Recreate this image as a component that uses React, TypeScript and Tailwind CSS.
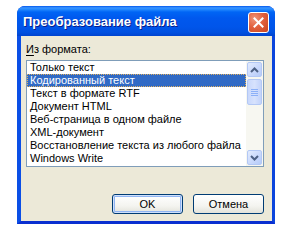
import React from "react";

const items = [
  "Только текст",
  "Кодированный текст",
  "Текст в формате RTF",
  "Документ HTML",
  "Веб-страница в одном файле",
  "XML-документ",
  "Восстановление текста из любого файла",
  "Windows Write",
];

function Chevron({ up }: { up: boolean }) {
  return (
    <svg width="9" height="6" viewBox="0 0 9 6">
      <path
        d={up ? "M1 5 L4.5 1.5 L8 5" : "M1 1 L4.5 4.5 L8 1"}
        fill="none"
        stroke="#4D6185"
        strokeWidth="2"
      />
    </svg>
  );
}

function ScrollBtn({ up }: { up: boolean }) {
  return (
    <div className="w-[15px] h-[15px] rounded-[2px] border border-[#B3C8F5] bg-[linear-gradient(135deg,#E3ECFE_0%,#C7D7FC_60%,#B5CBF9_100%)] flex items-center justify-center">
      <Chevron up={up} />
    </div>
  );
}

export default function App() {
  return (
    <div className="w-[298px] h-[241px] bg-white pt-[6px] pl-[17px]" style={{ fontFamily: '"Liberation Sans", Arial, sans-serif' }}>
      <div className="w-[258px] h-[218px] flex flex-col rounded-t-[8px] overflow-hidden bg-[#0831D9]">
        {/* title bar */}
        <div className="h-[30px] shrink-0 flex items-center pl-[6px] pr-[6px] bg-[linear-gradient(to_bottom,#0058EE_0%,#3A93FF_6%,#288EFF_10%,#0065F5_20%,#0058EE_40%,#0055EA_70%,#0050E0_88%,#0043CF_100%)]">
          <span className="text-white font-bold text-[13px] leading-none [text-shadow:1px_1px_0_#0A1E8A] pt-[1px] whitespace-nowrap">
            Преобразование файла
          </span>
          <div className="ml-auto mt-[2px] w-[21px] h-[21px] rounded-[3px] border border-white bg-[radial-gradient(circle_at_30%_30%,#F0967A_0%,#E2613E_45%,#C8441F_100%)] flex items-center justify-center">
            <svg width="11" height="11" viewBox="0 0 11 11">
              <path d="M1.5 1.5 L9.5 9.5 M9.5 1.5 L1.5 9.5" stroke="white" strokeWidth="2" strokeLinecap="square" />
            </svg>
          </div>
        </div>
        {/* body */}
        <div className="flex-1 flex border-l-[4px] border-r-[3px] border-b-[3px] border-l-[#0B4FE6] border-r-[#0B45DC] border-b-[#0A2FD0]">
          <div className="flex-1 bg-[#ECE9D8] flex flex-col pl-[5px] pr-[8px] pt-[7px] pb-[7px] text-[11px] text-black">
            <div className="leading-[13px] h-[13px]">
              <span className="underline underline-offset-[2px]">И</span>з формата:
            </div>
            <div className="mt-[4px] h-[107px] border border-[#7F9DB9] bg-white flex">
              <div className="flex-1 flex flex-col">
                {items.map((t, i) => (
                  <div
                    key={t}
                    className={
                      i === 1
                        ? "h-[13px] leading-[13px] pl-[3px] bg-[#316AC5] text-white outline outline-1 outline-dotted outline-[#E0B060] -outline-offset-1 whitespace-nowrap"
                        : "h-[13px] leading-[13px] pl-[3px] whitespace-nowrap"
                    }
                  >
                    {t}
                  </div>
                ))}
              </div>
              <div className="w-[17px] shrink-0 bg-[#F7F7F1] flex flex-col p-[1px]">
                <ScrollBtn up />
                <div className="mt-[2px] h-[26px] w-[15px] rounded-[2px] border border-[#B3C8F5] bg-[linear-gradient(to_right,#C9D8FC_0%,#D7E2FD_50%,#C2D3FB_100%)] flex flex-col items-center justify-center gap-[1px]">
                  <div className="w-[7px] h-[1px] bg-[#8CB0F8]" />
                  <div className="w-[7px] h-[1px] bg-[#8CB0F8]" />
                  <div className="w-[7px] h-[1px] bg-[#8CB0F8]" />
                  <div className="w-[7px] h-[1px] bg-[#8CB0F8]" />
                </div>
                <div className="flex-1" />
                <ScrollBtn up={false} />
              </div>
            </div>
            <div className="flex-1" />
            <div className="flex justify-end gap-[10px]">
              <div className="w-[71px] h-[20px] rounded-[3px] border border-[#003C74] bg-[linear-gradient(to_bottom,#FFFFFF_0%,#F4F4F0_60%,#E3E2DA_100%)] flex items-center justify-center shadow-[inset_0_0_0_1px_#CFE0FB,inset_0_0_0_2px_#90B4F2]">
                OK
              </div>
              <div className="w-[71px] h-[20px] rounded-[3px] border border-[#003C74] bg-[linear-gradient(to_bottom,#FFFFFF_0%,#F4F4F0_60%,#E3E2DA_100%)] flex items-center justify-center">
                Отмена
              </div>
            </div>
          </div>
        </div>
      </div>
    </div>
  );
}
